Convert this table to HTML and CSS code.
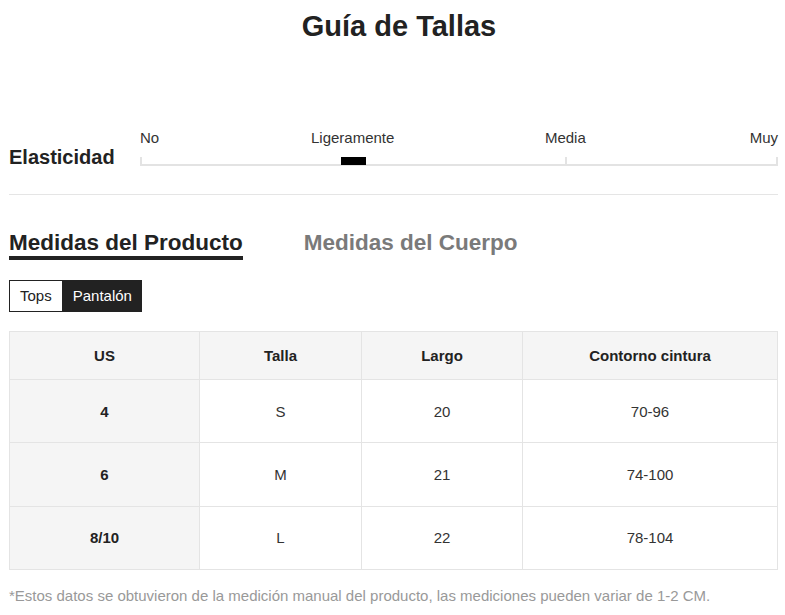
FILE: index.html
```html
<!DOCTYPE html>
<html lang="es">
<head>
  <meta charset="UTF-8">
  <meta name="viewport" content="width=device-width, initial-scale=1.0">
  <title>Guía de Tallas</title>
  <link rel="stylesheet" href="styles.css">
</head>
<body>
  <div class="guide">
    <h1 class="title">Guía de Tallas</h1>

    <div class="stretch">
      <div class="stretch-label">Elasticidad</div>
      <div class="scale">
        <div class="scale-labels">
          <span class="lvl lvl-no">No</span>
          <span class="lvl lvl-light">Ligeramente</span>
          <span class="lvl lvl-mid">Media</span>
          <span class="lvl lvl-high">Muy</span>
        </div>
        <div class="track">
          <span class="tick tick-start"></span>
          <span class="tick tick-mid"></span>
          <span class="tick tick-end"></span>
          <span class="marker"></span>
        </div>
      </div>
    </div>

    <div class="divider"></div>

    <div class="tabs">
      <div class="tab active">Medidas del Producto</div>
      <div class="tab">Medidas del Cuerpo</div>
    </div>

    <div class="switch">
      <button class="switch-btn">Tops</button>
      <button class="switch-btn selected">Pantalón</button>
    </div>

    <table class="sizes">
      <thead>
        <tr>
          <th class="c-us">US</th>
          <th class="c-size">Talla</th>
          <th class="c-len">Largo</th>
          <th class="c-waist">Contorno cintura</th>
        </tr>
      </thead>
      <tbody>
        <tr><th>4</th><td>S</td><td>20</td><td>70-96</td></tr>
        <tr><th>6</th><td>M</td><td>21</td><td>74-100</td></tr>
        <tr><th>8/10</th><td>L</td><td>22</td><td>78-104</td></tr>
      </tbody>
    </table>

    <p class="note">*Estos datos se obtuvieron de la medición manual del producto, las mediciones pueden variar de 1-2 CM.</p>
  </div>
</body>
</html>
```

FILE: styles.css
```css
body {
  margin: 0;
  padding: 0;
  font-family: 'Liberation Sans', Arial, sans-serif;
  color: #222;
  background: #fff;
}
.guide {
  padding: 0 7px 0 9px;
}
.title {
  margin: 0;
  padding: 8px 0 0 11px;
  font-size: 29px;
  line-height: 36px;
  font-weight: bold;
  text-align: center;
  color: #222;
}

/* elasticidad */
.stretch {
  display: flex;
  align-items: flex-start;
  margin-top: 86px;
}
.stretch-label {
  width: 131px;
  flex-shrink: 0;
  margin-top: 15px;
  font-size: 20px;
  line-height: 24px;
  font-weight: bold;
}
.scale {
  flex: 1;
}
.scale-labels {
  display: grid;
  grid-template-columns: repeat(6, 1fr);
  font-size: 15px;
  line-height: 16px;
  color: #333;
}
.lvl-no { grid-column: 1; }
.lvl-light { grid-column: 2 / span 2; text-align: center; }
.lvl-mid { grid-column: 4 / span 2; text-align: center; }
.lvl-high { grid-column: 6; text-align: right; }
.track {
  position: relative;
  height: 7px;
  margin-top: 11px;
  border-bottom: 2px solid #e3e3e3;
}
.tick {
  position: absolute;
  bottom: 0;
  width: 2px;
  height: 7px;
  background: #e3e3e3;
}
.tick-start { left: 0; }
.tick-mid { left: 66.66%; }
.tick-end { right: 0; }
.marker {
  position: absolute;
  left: 33.33%;
  top: 0;
  width: 25px;
  height: 8px;
  margin-left: -12px;
  background: #000;
}
.divider {
  margin-top: 25px;
  height: 1px;
  background: #e5e5e5;
}

/* tabs */
.tabs {
  display: flex;
  gap: 61px;
  margin-top: 35px;
}
.tab {
  font-size: 22.5px;
  line-height: 26px;
  font-weight: bold;
  color: #7a7a7a;
  border-bottom: 4px solid transparent;
}
.tab.active {
  color: #222;
  border-bottom-color: #222;
}
.switch {
  display: flex;
  margin-top: 20px;
}
.switch-btn {
  font-family: 'Liberation Sans', Arial, sans-serif;
  font-size: 15px;
  line-height: 30px;
  padding: 0 10px;
  margin: 0;
  border: 1px solid #222;
  background: #fff;
  color: #222;
}
.switch-btn.selected {
  padding: 0 9px;
  background: #222;
  color: #fff;
}

/* table */
.sizes {
  width: 100%;
  margin-top: 19px;
  border-collapse: collapse;
  table-layout: fixed;
  font-size: 15px;
  text-align: center;
}
.sizes th,
.sizes td {
  border: 1px solid #e4e4e4;
  padding: 0;
}
.sizes thead tr {
  height: 48px;
}
.sizes thead th {
  background: #f5f5f5;
  font-weight: bold;
}
.sizes tbody tr {
  height: 63.4px;
}
.sizes tbody th {
  background: #f5f5f5;
  font-weight: bold;
}
.sizes td {
  color: #333;
}
.c-us { width: 189px; }
.c-size { width: 161px; }
.c-len { width: 160px; }

.note {
  margin: 17px 0 0;
  font-size: 15px;
  line-height: 18px;
  color: #999;
}
```
